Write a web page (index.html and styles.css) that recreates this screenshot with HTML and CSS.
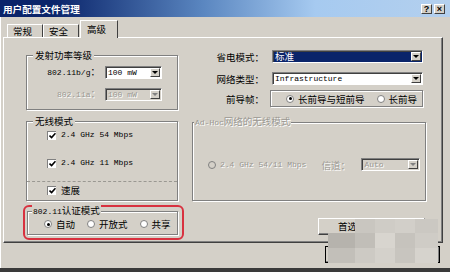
FILE: index.html
```html
<!DOCTYPE html>
<html lang="zh-CN">
<head>
   <meta charset="UTF-8">
   <title>用户配置文件管理</title>
   <link rel="stylesheet" href="styles.css">
</head>
<body>
   <div class="window">
      <div class="titlebar">
         <span class="title">用户配置文件管理</span>
         <span class="tb-btns"><span class="tb-btn">?</span><span class="tb-btn">×</span></span>
      </div>

      <div class="tabs">
         <div class="tab">常规</div>
         <div class="tab">安全</div>
         <div class="tab active">高级</div>
      </div>

      <div class="panel">
         <div class="col-left">
            <fieldset class="grp grp-power">
               <legend>发射功率等级</legend>
               <div class="frow">
                  <label><span class="m">802.11b/g</span>：</label>
                  <div class="combo"><span class="val m">100 mW</span><span class="arrow"></span></div>
               </div>
               <div class="frow off">
                  <label><span class="m">802.11a</span>：</label>
                  <div class="combo dis"><span class="val m">100 mW</span><span class="arrow"></span></div>
               </div>
            </fieldset>

            <fieldset class="grp grp-mode">
               <legend>无线模式</legend>
               <div class="check first"><span class="box"><svg width="7" height="7" viewBox="0 0 7 7"><path d="M0.5 3.5 L2.6 5.6 L6.5 1.2" fill="none" stroke="#000" stroke-width="1.6"/></svg></span><span class="m">2.4 GHz 54 Mbps</span></div>
               <div class="check second"><span class="box"><svg width="7" height="7" viewBox="0 0 7 7"><path d="M0.5 3.5 L2.6 5.6 L6.5 1.2" fill="none" stroke="#000" stroke-width="1.6"/></svg></span><span class="m">2.4 GHz 11 Mbps</span></div>
               <div class="sep"></div>
               <div class="check third"><span class="box"><svg width="7" height="7" viewBox="0 0 7 7"><path d="M0.5 3.5 L2.6 5.6 L6.5 1.2" fill="none" stroke="#000" stroke-width="1.6"/></svg></span><span>速展</span></div>
            </fieldset>

            <div class="mark">
               <fieldset class="grp grp-auth">
                  <legend><span class="m">802.11</span>认证模式</legend>
                  <div class="radios">
                     <span class="radio on"></span><span>自动</span>
                     <span class="radio"></span><span>开放式</span>
                     <span class="radio"></span><span>共享</span>
                  </div>
               </fieldset>
            </div>
         </div>

         <div class="col-right">
            <div class="rrow r1">
               <label>省电模式：</label>
               <div class="combo sel"><span class="val">标准</span><span class="arrow"></span></div>
            </div>
            <div class="rrow r2">
               <label>网络类型：</label>
               <div class="combo"><span class="val m">Infrastructure</span><span class="arrow"></span></div>
            </div>
            <div class="rrow r3">
               <label>前导帧：</label>
               <div class="preamble">
                  <span class="radio on"></span><span>长前导与短前导</span>
                  <span class="radio"></span><span>长前导</span>
               </div>
            </div>

            <fieldset class="grp grp-adhoc off">
               <legend><span class="m">Ad-Hoc</span>网络的无线模式</legend>
               <div class="adhoc-row">
                  <span class="radio dis"></span><span class="m">2.4 GHz 54/11 Mbps</span>
                  <span class="chan">信道：</span>
                  <div class="combo dis"><span class="val m">Auto</span><span class="arrow"></span></div>
               </div>
            </fieldset>

            <div class="btn-row"><span class="btn pref">首选</span></div>
         </div>
      </div>

      <div class="footer"><span class="btn ok">确定</span></div>

      <div class="mosaic">
         <span></span><span></span><span></span><span></span><span></span>
         <span></span><span></span><span></span><span></span><span></span>
         <span></span><span></span><span></span><span></span><span></span>
      </div>
   </div>
</body>
</html>
```

FILE: styles.css
```css
* {
   box-sizing: border-box;
}
body {
   margin: 0;
   background: #3a3a3a;
   font-family: "Noto Sans CJK SC", sans-serif;
   font-size: 9.5px;
   line-height: 12px;
   color: #000;
}
.m {
   font-family: "Liberation Mono", monospace;
   font-size: 8px;
}
.window {
   width: 450px;
   height: 268px;
   background: #d4d0c8;
   position: relative;
   box-shadow: inset 1px 0 0 #fff;
}
.titlebar {
   height: 17px;
   background: linear-gradient(to right, #0a246a 12%, #5a86c0 45%, #a6caf0 70%, #b4d0ee 100%);
   display: flex;
   align-items: center;
   justify-content: space-between;
   padding: 0 5px 0 3px;
}
.title {
   color: #fff;
   font-weight: bold;
   font-size: 9.6px;
}
.tb-btns {
   display: flex;
   gap: 2px;
}
.tb-btn {
   width: 11px;
   height: 10px;
   background: #d4d0c8;
   border-top: 1px solid #fff;
   border-left: 1px solid #fff;
   border-right: 1px solid #404040;
   border-bottom: 1px solid #404040;
   font-family: "Liberation Sans", sans-serif;
   font-weight: bold;
   font-size: 9px;
   line-height: 8px;
   text-align: center;
}

/* tabs */
.tabs {
   height: 20px;
   display: flex;
   align-items: flex-end;
   padding-left: 7px;
}
.tab {
   width: 36px;
   height: 13px;
   line-height: 12px;
   padding-left: 5px;
   border-top: 1px solid #fff;
   border-left: 1px solid #fff;
   border-right: 1px solid #404040;
}
.tab.active {
   width: 38px;
   height: 18px;
   margin-left: 1px;
   margin-bottom: -1px;
   padding: 2px 0 0 6px;
   background: #d4d0c8;
   position: relative;
   z-index: 1;
}

.panel {
   margin-left: 3px;
   width: 440px;
   height: 206px;
   border-top: 1px solid #fff;
   border-left: 1px solid #fff;
   border-right: 1px solid #404040;
   border-bottom: 1px solid #404040;
   box-shadow: inset -1px -1px 0 #808080;
   display: flex;
   gap: 12px;
   padding-left: 22px;
}

/* group boxes */
.grp {
   margin: 0;
   padding: 0;
   border: 1px solid #808080;
   box-shadow: inset 1px 1px 0 #fff, 1px 1px 0 #fff;
   min-width: 0;
}
.grp legend {
   padding: 0 2px;
   margin-left: 6px;
   line-height: 12px;
   background: #d4d0c8;
}
.off,
.off legend {
   color: #9a9892;
   text-shadow: 1px 1px 0 #fff;
}

.col-left {
   width: 152px;
   padding-top: 11px;
}
.grp-power {
   padding: 4px 0 8px;
}
.frow {
   display: grid;
   grid-template-columns: 73px 57px;
   column-gap: 5px;
   align-items: center;
}
.frow + .frow {
   margin-top: 8px;
}
.frow label {
   text-align: right;
}

.combo {
   height: 13px;
   display: flex;
   align-items: center;
   background: #fff;
   border-top: 1px solid #808080;
   border-left: 1px solid #808080;
   border-right: 1px solid #fff;
   border-bottom: 1px solid #fff;
   box-shadow: inset 1px 1px 0 #404040;
   padding: 1px 1px 1px 2px;
}
.combo .val {
   flex: 1;
   line-height: 11px;
   white-space: nowrap;
}
.combo.dis {
   background: #d4d0c8;
}
.combo.sel {
   background: #0a246a;
   color: #fff;
}
.arrow {
   width: 10px;
   height: 9px;
   background: #d4d0c8;
   border-top: 1px solid #fff;
   border-left: 1px solid #fff;
   border-right: 1px solid #404040;
   border-bottom: 1px solid #404040;
   display: flex;
   align-items: center;
   justify-content: center;
}
.arrow::after {
   content: "";
   border-left: 3px solid transparent;
   border-right: 3px solid transparent;
   border-top: 3px solid #000;
}
.combo.dis .arrow::after {
   border-top-color: #808080;
}

.grp-mode {
   margin-top: 5px;
   padding: 2px 0 4px;
}
.check {
   height: 12px;
   display: flex;
   align-items: center;
   gap: 5px;
   padding-left: 20px;
}
.check.second {
   margin-top: 16px;
}
.box {
   width: 9px;
   height: 9px;
   background: #fff;
   border-top: 1px solid #808080;
   border-left: 1px solid #808080;
   display: flex;
   align-items: center;
   justify-content: center;
}
.sep {
   margin-top: 12px;
   border-top: 1px dashed #9a9892;
}
.check.third {
   margin-top: 2px;
}

.mark {
   margin: 4px -6px 0 -3px;
   padding: 0 4px 3px 2px;
   border: 2px solid #d8313f;
   border-radius: 6px;
}
.grp-auth {
   margin-top: -3px;
   padding: 0 0 4px 16px;
}
.grp-auth legend {
   margin-left: -12px;
   padding: 0 1px;
}
.radios,
.preamble,
.adhoc-row {
   display: flex;
   align-items: center;
}
.radios {
   height: 12px;
}
.radio {
   width: 8px;
   height: 8px;
   border-radius: 50%;
   background: #fff;
   border: 1px solid #808080;
   margin-right: 4px;
   display: flex;
   align-items: center;
   justify-content: center;
}
.radio.on::after {
   content: "";
   width: 3px;
   height: 3px;
   border-radius: 50%;
   background: #000;
}
.radio.dis {
   background: #d4d0c8;
}
.radios .radio + span ~ .radio,
.preamble .radio + span ~ .radio {
   margin-left: 12px;
}

/* right column */
.col-right {
   width: 237px;
   padding-top: 12px;
}
.rrow {
   display: grid;
   grid-template-columns: 74px 151px;
   column-gap: 8px;
   align-items: center;
}
.rrow label {
   text-align: right;
}
.r2 {
   margin-top: 9px;
}
.r3 {
   margin-top: 5px;
}
.preamble {
   height: 17px;
   margin-left: -2px;
   width: 153px;
   padding-left: 15px;
   border: 1px solid #808080;
   box-shadow: inset 1px 1px 0 #fff, 1px 1px 0 #fff;
}
.grp-adhoc {
   margin: 8px 0 0 2px;
   width: 234px;
   padding: 29px 0 29px 15px;
}
.grp-adhoc legend {
   margin-left: -14px;
   padding: 0 1px;
}
.chan {
   margin-left: 15px;
   width: 40px;
}
.adhoc-row .combo {
   width: 59px;
}

.btn {
   display: block;
   height: 17px;
   background: #d4d0c8;
   border-top: 1px solid #fff;
   border-left: 1px solid #fff;
   border-right: 1px solid #404040;
   border-bottom: 1px solid #404040;
   box-shadow: inset -1px -1px 0 #808080;
   line-height: 14px;
}
.btn-row {
   display: flex;
   justify-content: flex-end;
   padding-right: 2px;
   margin-top: 17px;
}
.pref {
   width: 107px;
   padding-left: 19px;
}
.footer {
   display: flex;
   justify-content: flex-end;
   padding: 3px 10px 0 0;
}
.ok {
   width: 115px;
   border: 1px solid #000;
   text-align: center;
}

/* pixelated blur over the lower right buttons */
.mosaic {
   position: absolute;
   left: 328px;
   top: 219px;
   display: grid;
   grid-template-columns: 27px 20px 20px 20px 23px;
   grid-template-rows: 14px 15px 15px;
}
.mosaic span:nth-child(1) { background: transparent; }
.mosaic span:nth-child(2) { background: #c9c6c0; }
.mosaic span:nth-child(3) { background: #cfccc6; }
.mosaic span:nth-child(4) { background: #d2cfc9; }
.mosaic span:nth-child(5) { background: #cbc8c2; }
.mosaic span:nth-child(6) { background: #b6b3ad; }
.mosaic span:nth-child(7) { background: #c1beb8; }
.mosaic span:nth-child(8) { background: #d8d5cf; }
.mosaic span:nth-child(9) { background: #c6c3bd; }
.mosaic span:nth-child(10) { background: #cfccc6; }
.mosaic span:nth-child(11) { background: #c2bfb9; }
.mosaic span:nth-child(12) { background: #cdcac4; }
.mosaic span:nth-child(13) { background: #d4d1cb; }
.mosaic span:nth-child(14) { background: #c8c5bf; }
.mosaic span:nth-child(15) { background: #d6d3cd; }
```
